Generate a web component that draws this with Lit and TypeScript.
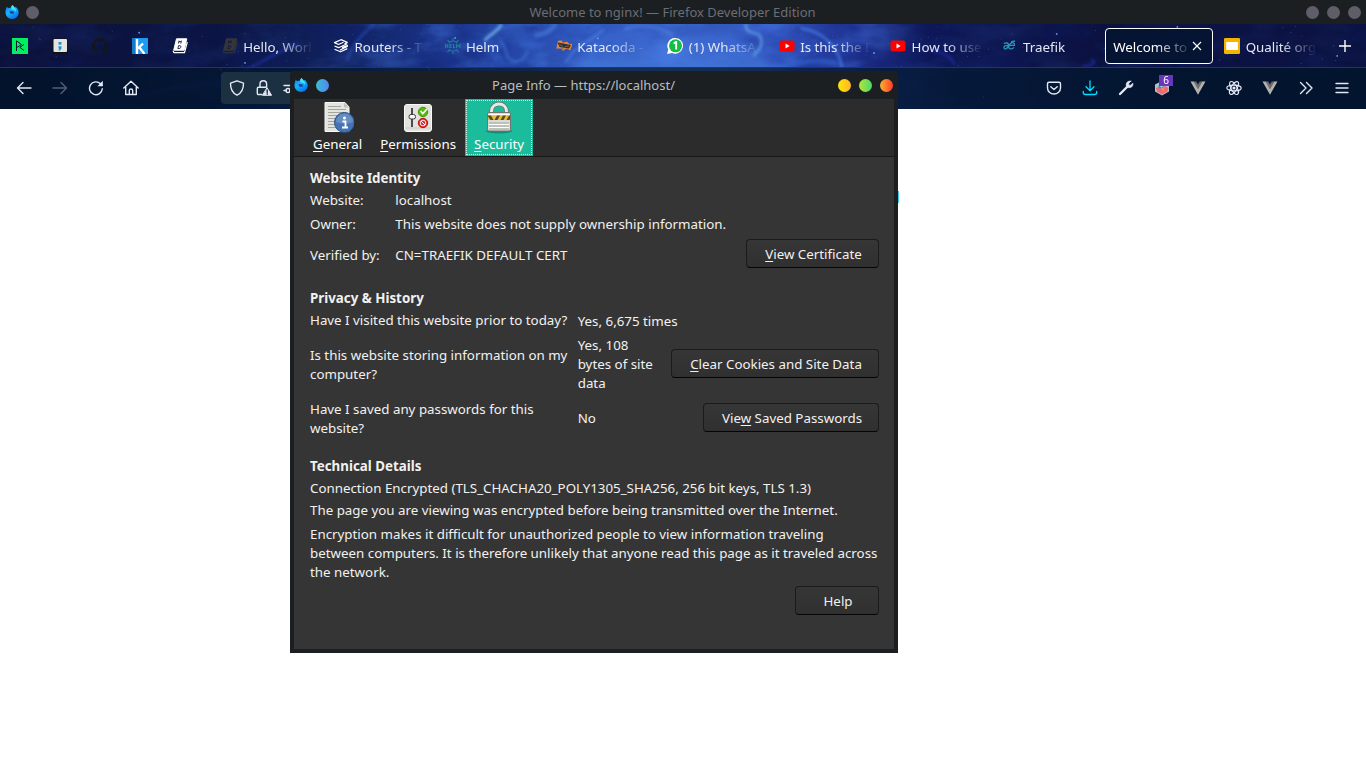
import { LitElement, html, css, svg } from "lit";
import { customElement } from "lit/decorators.js";

const FONT = css`"Noto Sans", "Open Sans", sans-serif`;

/* ---------- shared artwork ---------- */
const firefox = html`<svg width="14" height="14" viewBox="0 0 14 14">
  <defs><linearGradient id="fx" x1="0" y1="0" x2=".6" y2="1"><stop offset="0" stop-color="#1570e8"/><stop offset=".5" stop-color="#12b7fa"/><stop offset="1" stop-color="#0d72ee"/></linearGradient></defs>
  <path fill="url(#fx)" d="M7.300 0C8.600 1 9.500 2 9.900 3L10.600 1.700C12.500 3.300 13.700 5.300 13.700 7.800A6.600 6.200 0 0 1 .5 7.800C.4 5.600 1 3.200 1.900 1.500L3 3.300C4 2.700 5 2.800 5.500 3C5.900 1.700 6.500.8 7.300 0Z"/>
  <path fill="#46e6f7" d="M7.300 0C8.600 1 9.500 2 9.900 3.200C10.900 4.300 11.400 5.500 11 7C10.300 5 8.600 4.200 6.500 4.200C6 2.800 6.500 1.200 7.300 0Z"/>
  <path fill="#2440a8" d="M4.600 6.300C5.600 5.700 6.300 6.200 7 6.200C8.300 6.200 9.300 6.900 9 7.900C8.500 9.200 5.600 9.200 4.800 7.800Z"/>
</svg>`;

const favicons: Record<string, unknown> = {
  dc: svg`<rect width="16" height="16" fill="#03ef62"/><path d="M4.500 13V2.800L9.500 6.500L4.500 9.700M12 6.500L7.800 9.300L12 12.500" fill="none" stroke="#05192d" stroke-width="1"/>`,
  semi: svg`<rect x=".5" y=".5" width="15" height="15" rx="1.500" fill="#111"/><rect x="1.500" y="1" width="13.500" height="13" rx="1" fill="#e6e4df"/><rect x="6.500" y="4" width="3" height="2.700" fill="#2095d5"/><path d="M6.500 8.300H9.500V10.500L8 12.500H6.500L7.200 10.500H6.500Z" fill="#2095d5"/>`,
  github: svg`<path fill="#14161d" d="M8 0a8 8 0 0 0-2.500 15.600c.4.100.5-.2.500-.4v-1.500c-2.200.5-2.700-1-2.700-1-.4-.9-.9-1.200-.9-1.200-.7-.5.1-.5.1-.5.800.1 1.200.9 1.200.9.700 1.200 1.900.9 2.300.6.100-.5.300-.9.500-1.100-1.700-.2-3.600-.9-3.600-4 0-.9.300-1.600.8-2.100-.1-.2-.4-1 .1-2.100 0 0 .7-.2 2.200.8a7.400 7.400 0 0 1 4 0c1.500-1 2.200-.8 2.200-.8.500 1.100.2 1.900.1 2.100.5.600.8 1.300.8 2.100 0 3.100-1.900 3.700-3.600 3.900.3.300.5.800.5 1.500v2.200c0 .2.100.5.500.4A8 8 0 0 0 8 0z"/>`,
  k: svg`<rect width="16" height="16" fill="#1e9bf0"/><rect width="3" height="16" fill="#1679c8"/><path d="M5 1v15M6 10.500L11 5.500M7.500 9.500L12.500 16" fill="none" stroke="#fff" stroke-width="2.300"/>`,
  book: svg`<path d="M4.500.8H14.800L12 12.200H1.700Z" fill="#fff" stroke="#fff" stroke-linejoin="round"/><path d="M1 12.700L2 14.700H12.500L15.300 4" fill="none" stroke="#fff" stroke-width="1.200"/><path d="M6.400 5.500L7 2.800L8 4.200L9.400 2.800L8.800 5.500M5.900 10.500L6.500 7.700H8C9.500 7.700 9 10.500 7.200 10.500Z" fill="none" stroke="#0d153c" stroke-width=".9"/>`,
  bookdim: svg`<g fill="#35363b" stroke="#35363b"><path d="M4.500.8H14.800L12 12.200H1.700Z" stroke-linejoin="round"/><path d="M1 12.700L2 14.700H12.500L15.300 4" fill="none"/></g><path d="M6.400 5.500L7 2.800L8 4.200L9.400 2.800L8.800 5.500M5.900 10.500L6.500 7.700H8C9.500 7.700 9 10.500 7.200 10.500Z" fill="none" stroke="#10173a" stroke-width=".9"/>`,
  router: svg`<path d="M11.500 5.700L14.300 4.300L8 1.700L1.500 4.600L5.500 6.500L10.500 4.300M1.500 8L5.500 9.700L14.300 5.700M1.500 11.200L7.500 13.800L14.300 10.600M9 9.700L14.300 7.500V8.500L7 12" fill="none" stroke="#fff" stroke-width="1.250" stroke-linejoin="round"/>`,
  helm: svg`<g fill="none" stroke="#267b9c" stroke-width="1.100"><path d="M8 0v3M8 13v3M2.500 1.800l2 2.500M13.500 1.800l-2 2.500M2.500 14.200l2-2.500M13.500 14.200l-2-2.500M3.700 5a5.500 5.500 0 0 1 8.600 0M3.700 11a5.500 5.500 0 0 0 8.600 0M.6 6v4M2.800 6v4M.6 8H2.800M6.800 6.500H4.900V9.500H6.800M4.900 8H6.400M8.500 6V9.600H10M11.500 10V6.500L13.200 8.500L15 6.500V10"/></g>`,
  kata: svg`<g transform="rotate(12 8 8)"><path d="M1 4L5 3L6 5L10 3L13 5L16 4L15 11L11 10L8 13L6 11L1 12Z" fill="#e28331"/><path d="M1 6L14.500 5.500L13.500 9.500L4 10Z" fill="#2c3035"/><path d="M3 7.500L7 8.500M9 8.500L13 7M6 10.500l3 1" stroke="#8d6a4e" stroke-width=".8"/></g>`,
  wa: svg`<path d="M8.500 0A7.800 7.800 0 1 1 5 14.900L0 16L1.300 11.500A7.800 7.800 0 0 1 8.500 0Z" fill="#fff"/><circle cx="8.500" cy="7.800" r="6.500" fill="#10bf43"/><path d="M6.700 5.600L8.700 4H9.200V11.500" fill="none" stroke="#fff" stroke-width="1.800"/>`,
  yt: svg`<rect x=".5" y="2.500" width="15" height="11" rx="2.500" fill="#f00"/><path d="M6.500 5.500V10.500L10.700 8Z" fill="#fff"/>`,
  traefik: svg`<path d="M2 6C3 4.400 7 4.500 6.500 7.200C5.500 12 1.500 11.500 2 9C2.600 7 5 7.300 6.500 7.300H12.500C13 4.500 10.500 4 8.500 5.500C6 8 6.500 11 8.500 10.800C10.500 11 11.500 10 12 9.300M9 3.800L13 3" fill="none" stroke="#2597b6" stroke-width="1.300"/>`,
  slides: svg`<rect width="16" height="16" rx="1.300" fill="#f5b400"/><rect x="2.200" y="4" width="11.700" height="8" fill="#fff"/>`,
};
const favicon = (n: string) => html`<svg class="fav" width="16" height="16" viewBox="0 0 16 16">${favicons[n]}</svg>`;

const vue = svg`<path d="M.5 1.500H4L8 8.500L12 1.500H15.500L8 14.800Z" fill="#b4b1ad"/><path d="M3.600 1.500H6.300L8 4.400L9.700 1.500H12.400L8 9.200Z" fill="#6d6b6c"/>`;
const tools: Record<string, unknown> = {
  back: svg`<path d="M15 8H1.500M7 2.500L1.500 8L7 13.500"/>`,
  forward: svg`<path d="M1 8H14.500M9 2.500L14.500 8L9 13.500"/>`,
  reload: svg`<path d="M14.300 8.800A6.400 6.400 0 1 1 12.500 3.800L14 5.300"/><path d="M14.800.8V6.200H9.400Z" fill="currentColor" stroke="none"/>`,
  home: svg`<path d="M.8 8L8 1.200L15.200 8M2.700 7V14.500H13.300V7M6.300 14V10.500Q6.300 9 8 9T9.700 10.500V14"/>`,
  shield: svg`<path d="M8 .8L14.500 3.200C14.600 9 12.500 13 8 15.200C3.500 13 1.400 9 1.500 3.200Z"/>`,
  lock: svg`<path d="M4 7V4A3.300 3.300 0 0 1 10.600 4V7M6 14.500H2.500Q1.300 14.500 1.300 13.300V8.500Q1.300 7.200 2.500 7.200H10"/><path d="M11.200 8L15.600 15.300H6.800Z" fill="currentColor" stroke-width="1"/><path d="M11.200 10V12.400M11.200 13.700V14.200" stroke="#1b3041"/>`,
  perms: svg`<path d="M1 5.500H9M1 10.500H3M7 10.500H15"/><circle cx="5" cy="10.500" r="2"/><circle cx="11" cy="5.500" r="2"/>`,
  pocket: svg`<path d="M3 2.300H13Q14.500 2.300 14.500 3.800V8A6.500 6 0 0 1 1.500 8V3.800Q1.500 2.300 3 2.300ZM4.800 6.700L8 9.500L11.200 6.700"/>`,
  download: svg`<path d="M8 .8V10.500M4 6.800L8 10.700L12 6.800M1.300 11.500V12.500Q1.300 14.500 3.300 14.500H12.700Q14.700 14.500 14.700 12.500V11.500" stroke-width="1.300"/>`,
  wrench: svg`<path d="M2 14L9 7" stroke-width="2.400"/><path d="M12.800 1.200L10.800 3.300V5.200H12.700L14.800 3.200C15.500 6.500 12.500 8.500 9.500 7.300L8.400 6C7.500 3 10 .5 12.800 1.200Z" fill="currentColor" stroke-width=".7"/>`,
  hex: svg`<path d="M8 1L15 4.500V11.500L8 15.500L1 11.500V4.500Z" fill="#b2c2d2" stroke="none"/><path d="M2 8L5.500 6.500L8 9L11 6L14.500 8L13.500 11.500L8 14.500L3 11.500Z" fill="#f5686f" stroke="none"/><path d="M4 5L8 8L10 4L9 9L5 8Z" fill="#1596d1" stroke="none"/><path d="M7 8L10 8.500L9 11Z" fill="#ff9d4c" stroke="none"/>`,
  vue: svg`<g stroke="none">${vue}</g>`,
  react: svg`<g stroke-width="1.200"><ellipse cx="8" cy="8" rx="7.200" ry="2.900"/><ellipse cx="8" cy="8" rx="7.200" ry="2.900" transform="rotate(60 8 8)"/><ellipse cx="8" cy="8" rx="7.200" ry="2.900" transform="rotate(120 8 8)"/></g><circle cx="8" cy="8" r="1.600" fill="currentColor" stroke="none"/>`,
  more: svg`<path d="M2.500 2.500L8 8L2.500 13.500M8.500 2.500L14 8L8.500 13.500"/>`,
  menu: svg`<path d="M2 3.500H14M2 8H14M2 12.500H14"/>`,
};
const tool = (n: string) => html`<svg class="tool" width="16" height="16" viewBox="0 0 16 16" fill="none" stroke="currentColor" stroke-width="1.400" stroke-linecap="round" stroke-linejoin="round">${tools[n]}</svg>`;

/* ---------- starry theme backdrop ---------- */
function stars() {
  let s = 41;
  const rnd = () => (s = (s * 16807) % 2147483647) / 2147483647;
  const out = [];
  for (let i = 0; i < 210; i++) {
    const big = rnd() > 0.9;
    out.push(svg`<circle cx=${(rnd() * 1366).toFixed(1)} cy=${(rnd() * 85).toFixed(1)} r=${big ? 0.9 : 0.6} fill=${big ? "#69aef5" : "#4665c9"} opacity=${big ? 0.9 : 0.5}/>`);
  }
  return out;
}

@customElement("space-backdrop")
export class SpaceBackdrop extends LitElement {
  static styles = css`:host{display:block;width:1366px;height:85px}svg{display:block}`;
  render() {
    return html`<svg width="1366" height="85" viewBox="0 0 1366 85">
      <defs>
        <linearGradient id="base"><stop offset="0" stop-color="#0b1139"/><stop offset=".16" stop-color="#0b1544"/><stop offset=".25" stop-color="#11225f"/><stop offset=".32" stop-color="#193287"/><stop offset=".37" stop-color="#2445a6"/><stop offset=".43" stop-color="#2f56bc"/><stop offset=".5" stop-color="#3862ca"/><stop offset=".57" stop-color="#3052bc"/><stop offset=".63" stop-color="#1e308e"/><stop offset=".68" stop-color="#0e1858"/><stop offset=".8" stop-color="#0b1240"/><stop offset="1" stop-color="#0b1342"/></linearGradient>
        <linearGradient id="lobe" x1="0" y1="0" x2="0" y2="1"><stop offset="0" stop-color="#3b68d2" stop-opacity=".4"/><stop offset=".7" stop-color="#4a80dc" stop-opacity=".8"/></linearGradient>
        <filter id="cloud" x="0" y="0" width="100%" height="100%" color-interpolation-filters="sRGB"><feTurbulence type="fractalNoise" baseFrequency=".02 .04" numOctaves="5" seed="8"/><feColorMatrix values="0 0 0 0 .29  0 0 0 0 .5  0 0 0 0 .92  2.600 0 0 0 -1.050"/></filter>
        <filter id="dust" x="0" y="0" width="100%" height="100%" color-interpolation-filters="sRGB"><feTurbulence type="fractalNoise" baseFrequency=".022 .04" numOctaves="5" seed="23"/><feColorMatrix values="0 0 0 0 .06  0 0 0 0 .11  0 0 0 0 .4  0 2.400 0 0 -1.100"/></filter>
        <filter id="soft" x="-30%" y="-30%" width="160%" height="160%" color-interpolation-filters="sRGB"><feGaussianBlur stdDeviation="1.500"/></filter>
        <filter id="wide" x="-20%" y="-40%" width="140%" height="180%" color-interpolation-filters="sRGB"><feGaussianBlur stdDeviation="5"/></filter>
        <linearGradient id="fade"><stop offset="0" stop-color="#fff" stop-opacity=".06"/><stop offset=".22" stop-color="#fff" stop-opacity=".14"/><stop offset=".35" stop-color="#fff" stop-opacity=".5"/><stop offset=".6" stop-color="#fff" stop-opacity=".5"/><stop offset=".68" stop-color="#fff" stop-opacity=".1"/><stop offset="1" stop-color="#fff" stop-opacity=".06"/></linearGradient>
        <mask id="m"><rect width="1366" height="85" fill="url(#fade)"/></mask>
      </defs>
      <rect width="1366" height="85" fill="url(#base)"/>
      <rect width="1366" height="85" filter="url(#dust)" opacity=".32"/>
      <path d="M565 60C570 30 600 15 625 4Q665 -5 735 2C743 15 762 40 798 58L800 85H560Z" fill="url(#lobe)" filter="url(#wide)"/>
      <g mask="url(#m)"><rect width="1366" height="85" filter="url(#cloud)"/></g>
      <g fill="none" filter="url(#soft)" stroke-linecap="round">
        <path d="M120 85C150 62 190 62 215 60C250 48 262 34 296 21" stroke="#2438b8" stroke-width="2.500" opacity=".65"/>
        <path d="M347 36C352 20 363 10 374 0" stroke="#2d58cf" stroke-width="2.500" opacity=".55"/>
        <path d="M485 16C491 10 498 7 501 1" stroke="#80c0f5" stroke-width="2.500" opacity=".9"/>
        <path d="M537 11Q548 10 555 1" stroke="#4b7fe0" stroke-width="5" opacity=".6"/>
        <path d="M500 17C507 21 504 32 511 36Q522 41 527 28" stroke="#497bdd" stroke-width="2.500" opacity=".55"/>
        <path d="M566 38C576 20 591 18 603 6M625 5Q650 -3 672 11" stroke="#5286e8" stroke-width="2.500" opacity=".6"/>
        <path d="M746 0C745 12 758 7 760 12C764 20 760 25 754 31" stroke="#64a6e6" stroke-width="2.500" opacity=".8"/>
        <path d="M801 4C824 8 838 23 842 43" stroke="#4680ea" stroke-width="2.200" opacity=".9"/>
        <path d="M780 44Q810 33 835 39" stroke="#3468da" stroke-width="5" opacity=".5"/>
        <path d="M934 27Q950 30 954 40M1092 36Q1099 40 1083 43" stroke="#2630bd" stroke-width="2.500" opacity=".65"/>
      </g>
      ${stars()}
    </svg>`;
  }
}

/* ---------- browser window ---------- */
type Tab = { icon?: string; title: string; active?: boolean };
const TABS: Tab[] = [
  { icon: "bookdim", title: "Hello, Worl" }, { icon: "router", title: "Routers - T" },
  { icon: "helm", title: "Helm" }, { icon: "kata", title: "Katacoda -" },
  { icon: "wa", title: "(1) WhatsA" }, { icon: "yt", title: "Is this the D" },
  { icon: "yt", title: "How to use" }, { icon: "traefik", title: "Traefik" },
  { title: "Welcome to", active: true }, { icon: "slides", title: "Qualité org" },
];

@customElement("browser-chrome")
export class BrowserChrome extends LitElement {
  static styles = css`
    :host { display: block; color: #e3e8f5; font: 13.333px/19px ${FONT}; }
    svg { display: block; flex: none; }
    .title { height: 24px; display: grid; grid-template-columns: 60px 1fr 60px; align-items: center; background: #1b1f21; color: #6b6d78; }
    .left { display: flex; align-items: center; gap: 7px; padding-left: 5px; }
    .dot { width: 13px; height: 13px; border-radius: 50%; background: #5f5d68; }
    .name { text-align: center; padding-right: 21px; font-size: 13px; white-space: nowrap; padding-top: 1px; }
    .dots { display: flex; gap: 8px; justify-content: end; padding-right: 5px; }
    .theme { height: 85px; display: grid; overflow: hidden; }
    .theme > * { grid-area: 1 / 1; }
    .chrome { display: flex; flex-direction: column; }
    .tabs { height: 43px; display: flex; align-items: center; border-bottom: 1px solid #22375d; }
    .pins { width: 213.600px; flex: none; display: flex; gap: 24px; padding-left: 12px; box-sizing: border-box; }
    .tab { width: 108px; margin-right: 3.400px; flex: none; height: 36px; padding-left: 8.300px; box-sizing: border-box; display: flex; align-items: center; gap: 5.300px; border-radius: 4px; }
    .label { width: 70px; padding-top: 3px; white-space: nowrap; mask-image: linear-gradient(90deg, #000 34px, transparent 71px); }
    .label.short { mask-image: none; }
    .active { border: 1px solid #fff; background: #061434; padding-left: 7.500px; gap: 3px; color: #fff; }
    .active .label { width: 76px; mask-image: linear-gradient(90deg, #000 42px, transparent 80px); }
    .plus { margin-left: 10.500px; }
    .tools { height: 42px; box-sizing: border-box; display: flex; align-items: center; justify-content: space-between; padding: 0 16px 1px; background: linear-gradient(90deg, #03132b 0, #041733d9 18%, #071f3bc8 45%, #061b39d9 66%, #03142e 90%); border-bottom: 1px solid #15304f; }
    .nav, .ext { display: flex; gap: 20px; align-items: center; }
    .nav { flex: none; }
    .dim { opacity: .35; }
    .url { width: 640px; height: 32px; margin-left: 62px; box-sizing: border-box; padding-left: 8px; border-radius: 4px; background: #1b3041; display: flex; align-items: center; gap: 11px; }
    .home { margin-left: -1px; }
    .cyan { color: #00ddff; }
    .badged { display: grid; width: 16px; }
    .badged > * { grid-area: 1 / 1; }
    .badge { position: relative; top: -5px; left: 5px; width: 14px; height: 11px; font-size: 10px; line-height: 11px; text-align: center; color: #fff; background: #6a35bd; }
  `;
  render() {
    return html`
      <div class="title">
        <div class="left">${firefox}<i class="dot"></i></div>
        <div class="name">Welcome to nginx! — Firefox Developer Edition</div>
        <div class="dots"><i class="dot"></i><i class="dot"></i><i class="dot"></i></div>
      </div>
      <div class="theme">
        <space-backdrop></space-backdrop>
        <div class="chrome">
          <div class="tabs">
            <div class="pins">${["dc", "semi", "github", "k", "book"].map(favicon)}</div>
            ${TABS.map((t) => html`<div class="tab ${t.active ? "active" : ""}">
              ${t.icon ? favicon(t.icon) : ""}
              <div class="label ${t.title.length < 8 ? "short" : ""}">${t.title}</div>
              ${t.active ? html`<svg width="10" height="10" viewBox="0 0 10 10"><path d="M1 1L9 9M9 1L1 9" stroke="#fff" stroke-width="1.100"/></svg>` : ""}
            </div>`)}
            <svg class="plus" width="14" height="14" viewBox="0 0 14 14"><path d="M7 1V13M1 7H13" stroke="#fff" stroke-width="1.400"/></svg>
          </div>
          <div class="tools">
            <div class="nav">${tool("back")}<span class="dim">${tool("forward")}</span>${tool("reload")}<span class="home">${tool("home")}</span>
              <div class="url">${tool("shield")}${tool("lock")}${tool("perms")}</div>
            </div>
            <div class="ext">${tool("pocket")}<span class="cyan">${tool("download")}</span>${tool("wrench")}
              <div class="badged">${tool("hex")}<span class="badge">6</span></div>
              ${["vue", "react", "vue", "more", "menu"].map(tool)}
            </div>
          </div>
        </div>
      </div>`;
  }
}

/* ---------- Page Info window ---------- */
const pageIcons = {
  general: svg`<path d="M3 .5H23L27 5V29.500H3Z" fill="#e5e5e0" stroke="#f7f7f5"/><path d="M22 .5V5.500H27Z" fill="#c1c1bc"/><path d="M6 4.500H19M6 7.500H24M6 10.500H24M6 13.500H20M6 16.500H15M6 19.500H13M6 22.500H13M6 25.500H14" stroke="#a3a49f"/><circle cx="22.500" cy="20.500" r="10" fill="#4674b2" stroke="#244f8a"/><path d="M14 20A8.500 8.500 0 0 1 31 20Q23 23 14 20Z" fill="#7298c9" opacity=".7"/><circle cx="22.500" cy="16" r="1.500" fill="#fff"/><path d="M20.500 19.500H23.500V25M20 25.500H26" stroke="#fff" stroke-width="1.800" fill="none"/>`,
  permissions: svg`<rect x="2.500" y="2.500" width="27" height="27" rx="2.500" fill="#e2e3df" stroke="#fafaf9"/><path d="M3 26H29" stroke="#c8c9c5"/><path d="M10 6V25" stroke="#4b4d4c" stroke-width="2"/><rect x="7" y="12.500" width="6.500" height="4.500" rx="2" fill="#f7f7f6" stroke="#3b3e3e"/><circle cx="21" cy="10" r="4.700" fill="#5bb811" stroke="#3f9800"/><path d="M18.500 9L20.800 11.500L25 7" fill="none" stroke="#fff" stroke-width="1.700"/><circle cx="21" cy="21" r="4.700" fill="#e22b2b" stroke="#c00d0d"/><circle cx="21" cy="21" r="2.800" fill="none" stroke="#ffecec"/><path d="M19 19L23 23" stroke="#fff"/>`,
  security: svg`<ellipse cx="16" cy="29" rx="13" ry="2.500" fill="#0b5f50" opacity=".5"/><path d="M8.500 14V9.500C8.500 -.5 23.500 -.5 23.500 9.500V14" fill="none" stroke="#6b716c" stroke-width="4.500"/><path d="M8.500 14V9.500C8.500 -.5 23.500 -.5 23.500 9.500V14" fill="none" stroke="#e7e9e5" stroke-width="3"/><rect x="4.500" y="10.500" width="23" height="18.500" rx="1.500" fill="#d9dbd5" stroke="#72746e"/><path d="M5 12.500H27M6 22.500H26M6 25.500H26" stroke="#fff"/><rect x="5" y="13.500" width="22" height="4.500" fill="#e8bd35"/><path d="M5 13.500H8L10.500 18H7.500L5 14.500ZM14 13.500H17L14.500 18H11.500ZM20 13.500H23L20.500 18H17.500ZM26 13.500H27V17L26.500 18H23.500Z" fill="#5c4d20"/><path d="M6 21H26M6 24H26M6 27H26" stroke="#a4a69f"/>`,
};
const big = (k: keyof typeof pageIcons) => html`<svg width="32" height="32" viewBox="0 0 32 32">${pageIcons[k]}</svg>`;

@customElement("page-info")
export class PageInfo extends LitElement {
  static styles = css`
    :host { display: flex; flex-direction: column; box-sizing: border-box; width: 608px; height: 582px; padding: 0 4px 4px; background: #1b1f21; border-radius: 4px 4px 0 0; color: #f1f1f0; font: 13.333px/19px ${FONT}; }
    svg { display: block; }
    .title { height: 28px; flex: none; display: grid; grid-template-columns: 60px 1fr 60px; align-items: center; color: #b9bdc0; }
    .name { text-align: center; padding-right: 21px; font-size: 13px; }
    .left, .dots { display: flex; align-items: center; gap: 7.500px; }
    .dots { justify-content: end; gap: 8px; padding-right: 1px; }
    .dot { width: 13px; height: 13px; flex: none; border-radius: 50%; background: linear-gradient(90deg, #38bfd2, #5485f1); }
    .yellow { background: linear-gradient(90deg, #ffe600, #ffb52b); }
    .green { background: linear-gradient(90deg, #b7e43c, #4bd969); }
    .red { background: linear-gradient(90deg, #ffb229, #ff3a2f); }
    .tabs { height: 57px; flex: none; display: flex; padding-left: 10px; background: #2c2c2c; border-bottom: 1px solid #181818; }
    .tab { padding: 3px 9px 0; display: flex; flex-direction: column; gap: 1px; align-items: center; color: #fff; }
    .selected { background: #1abc9c; outline: 1px dotted #c9f2e8; outline-offset: -2px; }
    u { text-decoration-thickness: 1px; text-underline-offset: 2px; text-decoration-skip-ink: none; }
    .body { flex: 1; padding: 12px 15px 0 16px; background: #353535; white-space: nowrap; }
    h2 { margin: 0 0 3px; font: 700 13.333px/19px ${FONT}; }
    .row { display: grid; align-items: center; }
    .ident { grid-template-columns: 85.300px 1fr auto; margin-bottom: 5px; }
    .verified { margin-bottom: 21px; height: 29px; }
    .verified span { padding-top: 4px; }
    .priv { grid-template-columns: 267.700px 1fr auto; }
    .visited { height: 25px; align-items: start; }
    .visited .val { padding-top: 1px; }
    .stored { height: 57px; }
    .saved { height: 38px; margin: 7px 0 19px; }
    .saved .val { padding-bottom: 2px; }
    button { height: 29px; margin: 0; box-sizing: border-box; padding: 1px 15px 0 17px; border: 1px solid #1b1b1b; border-bottom-color: #050505; border-radius: 4px; background: linear-gradient(#363636, #303030); color: #f1f1f0; font: inherit; }
    .cert { width: 133px; }
    .clear { width: 208px; margin-bottom: 2px; }
    .pass { width: 176px; margin-bottom: 3px; }
    .help { width: 84px; }
    p { margin: 0 0 3px; }
    .long { margin: 5px 0 4px; }
    .foot { display: flex; justify-content: end; }
  `;
  render() {
    return html`
      <div class="title">
        <div class="left">${firefox}<i class="dot"></i></div>
        <div class="name">Page Info — https://localhost/</div>
        <div class="dots"><i class="dot yellow"></i><i class="dot green"></i><i class="dot red"></i></div>
      </div>
      <div class="tabs">
        <div class="tab">${big("general")}<span><u>G</u>eneral</span></div>
        <div class="tab">${big("permissions")}<span><u>P</u>ermissions</span></div>
        <div class="tab selected">${big("security")}<span><u>S</u>ecurity</span></div>
      </div>
      <div class="body">
        <h2>Website Identity</h2>
        <div class="row ident"><span>Website:</span><span>localhost</span></div>
        <div class="row ident"><span>Owner:</span><span>This website does not supply ownership information.</span></div>
        <div class="row ident verified"><span>Verified by:</span><span>CN=TRAEFIK DEFAULT CERT</span><button class="cert"><u>V</u>iew Certificate</button></div>
        <h2>Privacy &amp; History</h2>
        <div class="row priv visited"><span>Have I visited this website prior to today?</span><span class="val">Yes, 6,675 times</span></div>
        <div class="row priv stored"><span>Is this website storing information on my<br>computer?</span><span>Yes, 108<br>bytes of site<br>data</span><button class="clear"><u>C</u>lear Cookies and Site Data</button></div>
        <div class="row priv saved"><span>Have I saved any passwords for this<br>website?</span><span class="val">No</span><button class="pass">Vie<u>w</u> Saved Passwords</button></div>
        <h2>Technical Details</h2>
        <p>Connection Encrypted (TLS_CHACHA20_POLY1305_SHA256, 256 bit keys, TLS 1.3)</p>
        <p>The page you are viewing was encrypted before being transmitted over the Internet.</p>
        <p class="long">Encryption makes it difficult for unauthorized people to view information traveling<br>between computers. It is therefore unlikely that anyone read this page as it traveled across<br>the network.</p>
        <div class="foot"><button class="help">Help</button></div>
      </div>`;
  }
}

@customElement("app-root")
export class AppRoot extends LitElement {
  static styles = css`
    :host { display: block; position: relative; width: 1366px; height: 768px; overflow: hidden; background: #fff; }
    .page { padding: 82px 0 0 898px; }
    .mark { width: 1px; height: 12px; background: #43cbe8; }
    .window { position: absolute; left: 290px; top: 71px; }
  `;
  render() {
    return html`<browser-chrome></browser-chrome>
      <main class="page"><div class="mark"></div></main>
      <page-info class="window"></page-info>`;
  }
}
